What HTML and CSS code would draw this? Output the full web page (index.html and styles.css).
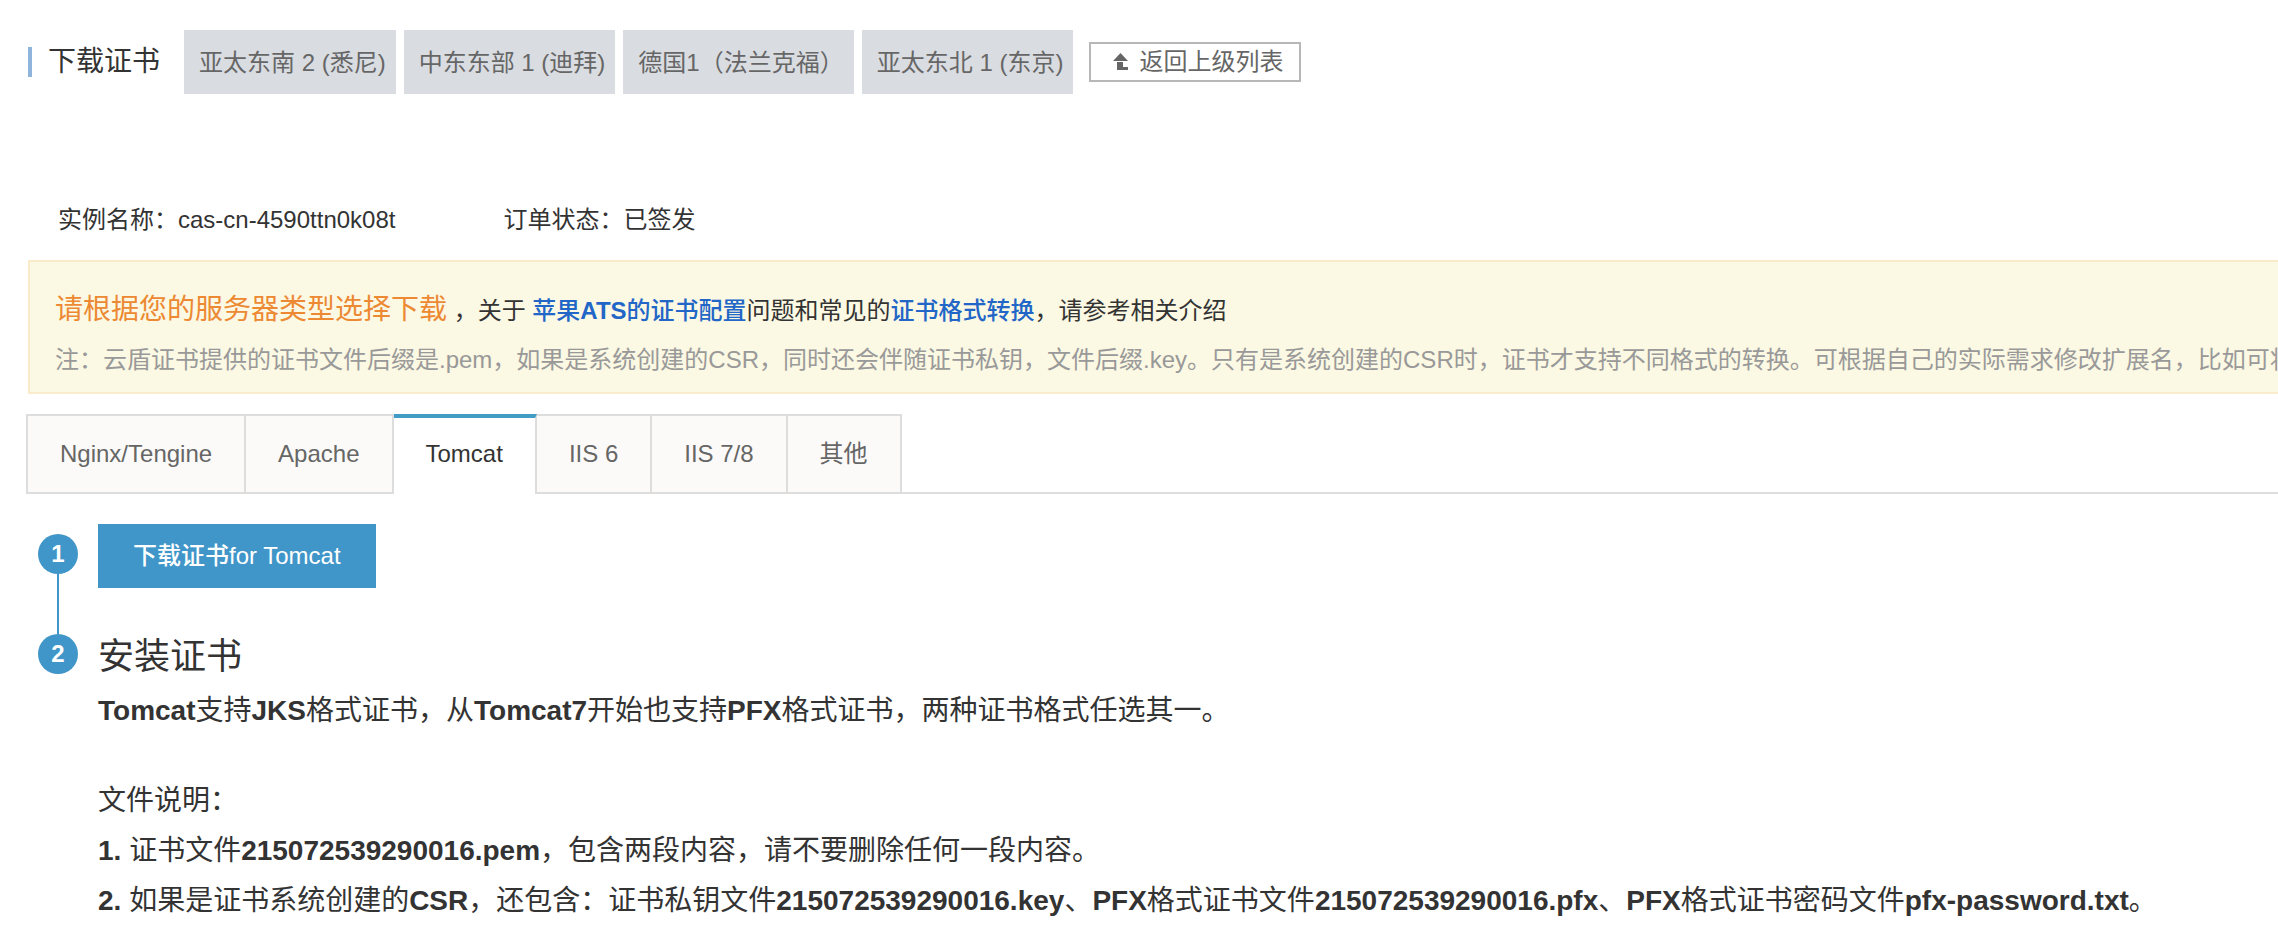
FILE: index.html
```
<!DOCTYPE html>
<html lang="zh-CN">
<head>
    <meta charset="UTF-8">
    <meta name="viewport" content="width=device-width, initial-scale=1.0">
    <title>下载证书</title>
    <link rel="stylesheet" href="styles.css">
</head>
<body>
    <header class="header">
        <h1 class="header-title">下载证书</h1>
        <div class="regions">
            <button type="button" class="region">亚太东南 2 (悉尼)</button>
            <button type="button" class="region">中东东部 1 (迪拜)</button>
            <button type="button" class="region">德国1（法兰克福）</button>
            <button type="button" class="region">亚太东北 1 (东京)</button>
        </div>
        <a href="#" class="back">
            <svg class="back-icon" viewBox="0 0 16 18" aria-hidden="true">
                <path d="M7.500 0L15 8H0Z M4 9H10V14H15V17H4Z"/>
            </svg>
            <span>返回上级列表</span>
        </a>
    </header>

    <div class="info">
        <span>实例名称：cas-cn-4590ttn0k08t</span>
        <span>订单状态：已签发</span>
    </div>

    <div class="alert">
        <p class="alert-main"><span class="alert-title">请根据您的服务器类型选择下载</span> ，关于 <a href="#">苹果<b>ATS</b>的证书配置</a>问题和常见的<a href="#">证书格式转换</a>，请参考相关介绍</p>
        <p class="alert-note">注：云盾证书提供的证书文件后缀是.pem，如果是系统创建的CSR，同时还会伴随证书私钥，文件后缀.key。只有是系统创建的CSR时，证书才支持不同格式的转换。可根据自己的实际需求修改扩展名，比如可将</p>
    </div>

    <div class="tabs" role="tablist">
        <button type="button" class="tab" role="tab">Nginx/Tengine</button>
        <button type="button" class="tab" role="tab">Apache</button>
        <button type="button" class="tab active" role="tab" aria-selected="true">Tomcat</button>
        <button type="button" class="tab" role="tab">IIS 6</button>
        <button type="button" class="tab" role="tab">IIS 7/8</button>
        <button type="button" class="tab" role="tab">其他</button>
    </div>

    <main class="steps">
        <section class="step">
            <div class="step-side"><span class="step-num">1</span></div>
            <div class="step-body">
                <button type="button" class="download">下载证书for Tomcat</button>
            </div>
        </section>
        <section class="step">
            <div class="step-side"><span class="step-num">2</span></div>
            <div class="step-body">
                <h2 class="step-title">安装证书</h2>
                <p><b>Tomcat</b>支持<b>JKS</b>格式证书，从<b>Tomcat7</b>开始也支持<b>PFX</b>格式证书，两种证书格式任选其一。</p>
                <div class="files">
                    <p>文件说明：</p>
                    <p><b>1.</b> 证书文件<b>215072539290016.pem</b>，包含两段内容，请不要删除任何一段内容。</p>
                    <p><b>2.</b> 如果是证书系统创建的<b>CSR</b>，还包含：证书私钥文件<b>215072539290016.key</b>、<b>PFX</b>格式证书文件<b>215072539290016.pfx</b>、<b>PFX</b>格式证书密码文件<b>pfx-password.txt</b>。</p>
                </div>
            </div>
        </section>
    </main>
</body>
</html>
```

FILE: styles.css
```
* {
    margin: 0;
    padding: 0;
    box-sizing: border-box;
}
body {
    padding: 30px 0 20px 28px;
    background-color: #fff;
    color: #333;
    font: 24px/36px "Liberation Sans", "Noto Sans CJK SC", sans-serif;
    text-spacing-trim: space-all;
    overflow-x: hidden;
}
button {
    border: 0;
    font: inherit;
    color: inherit;
    white-space: nowrap;
    cursor: pointer;
}
a {
    color: #2266c8;
    text-decoration: none;
}

/* header */
.header {
    display: flex;
    align-items: center;
}
.header-title {
    padding-left: 16px;
    border-left: 4px solid #8fb4dc;
    font-size: 28px;
    line-height: 30px;
    font-weight: 400;
    white-space: nowrap;
}
.regions {
    display: flex;
    gap: 8px;
    margin-left: 24px;
}
.region {
    height: 64px;
    padding: 2px 10px 0 15px;
    background-color: #d9dce1;
    color: #666;
}
.back {
    display: flex;
    align-items: center;
    gap: 10px;
    height: 40px;
    margin-left: 16px;
    padding: 0 16px 0 22px;
    border: 2px solid #b7b7b7;
    color: #666;
    white-space: nowrap;
}
.back-icon {
    width: 16px;
    height: 18px;
    fill: #666;
}

/* instance info */
.info {
    display: flex;
    gap: 108px;
    margin-top: 108px;
    padding-left: 30px;
}

/* alert */
.alert {
    margin-top: 22px;
    padding: 22px 0 10px 25px;
    border: 2px solid #faebcc;
    border-right: 0;
    background-color: #fbf8e3;
    white-space: nowrap;
    overflow: hidden;
}
.alert-main {
    line-height: 54px;
}
.alert-main a {
    font-weight: 500;
}
.alert-title {
    color: #ec8932;
    font-size: 28px;
    line-height: 1;
}
.alert-note {
    line-height: 44px;
    color: #999;
}

/* tabs */
.tabs {
    display: flex;
    margin: 20px 0 0 -2px;
    border-bottom: 2px solid #ddd;
}
.tab {
    height: 78px;
    padding: 0 32px;
    border-top: 2px solid #ddd;
    border-right: 2px solid #ddd;
    background-color: #fbfaf8;
    color: #666;
}
.tab:first-child {
    border-left: 2px solid #ddd;
}
.tab.active {
    height: 80px;
    margin-bottom: -2px;
    padding-bottom: 4px;
    border-top: 4px solid #419dc6;
    background-color: #fff;
    color: #333;
}

/* steps */
.steps {
    padding: 30px 0 0 10px;
}
.step {
    display: flex;
    gap: 20px;
}
.step-side {
    display: flex;
    flex-direction: column;
    align-items: center;
    flex-shrink: 0;
    width: 40px;
}
.step:first-child .step-side {
    padding-top: 10px;
}
/* line down to the next circle */
.step:first-child .step-side::after {
    content: "";
    flex: 1;
    width: 2px;
    background-color: #4096c8;
}
.step-num {
    width: 40px;
    height: 40px;
    border-radius: 50%;
    background-color: #4096c8;
    color: #fff;
    line-height: 40px;
    font-weight: 700;
    text-align: center;
}
.step-body {
    font-size: 28px;
    line-height: 50px;
}
.step:first-child .step-body {
    padding-bottom: 46px;
}
.download {
    display: block;
    height: 64px;
    padding: 0 35px;
    background-color: #4096c8;
    color: #fff;
    font-size: 24px;
    font-weight: 500;
}
.step-title {
    margin-bottom: 6px;
    font-size: 36px;
    line-height: 46px;
    font-weight: 400;
}
.files {
    margin-top: 40px;
}
```
